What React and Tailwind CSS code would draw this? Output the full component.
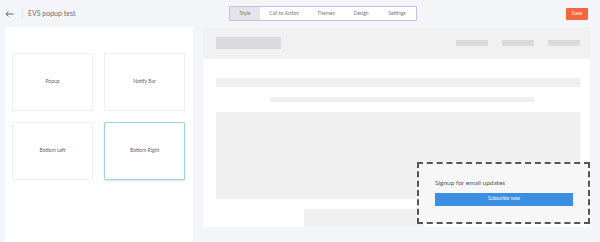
import React from 'react';

const tabs = [
  { label: 'Style', w: 'w-[30px]', active: true },
  { label: 'Call to Action', w: 'w-[48px]' },
  { label: 'Themes', w: 'w-[36px]' },
  { label: 'Design', w: 'w-[34px]' },
  { label: 'Settings', w: 'w-[38px]' },
];

function Card({ label, selected }) {
  return (
    <div
      className={
        'w-[81px] h-[58px] bg-white flex items-center justify-center text-[5px] text-[#666] rounded-[1px] ' +
        (selected
          ? 'border-[1.5px] border-[#9ad3e8] shadow-[0_1px_2px_rgba(0,0,0,0.12)]'
          : 'border-[1.5px] border-[#efefef]')
      }
    >
      {label}
    </div>
  );
}

export default function App() {
  return (
    <div className="w-[600px] h-[242px] bg-[#f4f5f8] flex flex-col overflow-hidden" style={{ fontFamily: 'Lato, "Noto Sans", sans-serif' }}>
      {/* barra superior */}
      <div className="h-[27px] flex items-center shrink-0">
        <div className="w-[216px] flex items-center pl-[5px]">
          <svg width="9" height="6" viewBox="0 0 9 6" className="text-[#555]">
            <path d="M8.5 3H1M3.5 0.5L1 3l2.5 2.5" fill="none" stroke="currentColor" strokeWidth="0.9" />
          </svg>
          <div className="ml-[8px] w-px h-[10px] bg-[#e3e3e8]" />
          <span className="ml-[5px] text-[7px] text-[#6b6b78]">EVS popup test</span>
        </div>
        <div className="ml-[13px] flex h-[15px] border border-[#cdbbe6] bg-white">
          {tabs.map(t => (
            <div
              key={t.label}
              className={t.w + ' flex items-center justify-center text-[5px] text-[#777] ' + (t.active ? 'bg-[#e4e4ea]' : '')}
            >
              {t.label}
            </div>
          ))}
        </div>
        <div className="ml-auto mr-[12px] w-[22px] h-[12px] bg-[#f4673c] text-white text-[5px] flex items-center justify-center rounded-[1px]">
          Save
        </div>
      </div>

      <div className="flex flex-1 min-h-0">
        {/* panel izquierdo */}
        <div className="ml-[5px] w-[188px] bg-white pt-[26px] pl-[7px]">
          <div className="grid grid-cols-[81px_81px] gap-x-[11px] gap-y-[11px]">
            <Card label="Popup" />
            <Card label="Notify Bar" />
            <Card label="Bottom Left" />
            <Card label="Bottom Right" selected />
          </div>
        </div>

        {/* vista previa */}
        <div className="ml-[10px] w-[387px] h-[200px] bg-white relative flex flex-col">
          <div className="h-[32px] bg-[#f1f1f2] flex items-center pl-[13px] pr-[10px]">
            <div className="w-[65px] h-[12px] bg-[#dadade]" />
            <div className="ml-auto flex gap-[14px]">
              <div className="w-[32px] h-[6px] bg-[#dadade]" />
              <div className="w-[32px] h-[6px] bg-[#dadade]" />
              <div className="w-[32px] h-[6px] bg-[#dadade]" />
            </div>
          </div>
          <div className="pl-[13px] pr-[10px] pt-[19px] flex flex-col">
            <div className="h-[9px] bg-[#efeff0]" />
            <div className="mt-[10px] h-[5px] bg-[#f0f0f1] ml-[54px] mr-[46px]" />
            <div className="mt-[10px] h-[87px] bg-[#f0f0f1]" />
          </div>
          <div className="mt-[10px] ml-[101px] w-[120px] h-[18px] bg-[#f0f0f1]" />

          {/* popup */}
          <div className="absolute left-[214px] top-[135px] w-[173px] h-[62px] bg-[#f7f7f8] border-[2.5px] border-dashed border-[#555] pl-[16px] pt-[16px]">
            <div className="text-[6.5px] text-[#555] leading-none">Signup for email updates</div>
            <div className="mt-[6px] w-[138px] h-[13px] bg-[#3b8ee2] text-white text-[5px] flex items-center justify-center">
              Subscribe now
            </div>
          </div>
        </div>
      </div>
    </div>
  );
}
